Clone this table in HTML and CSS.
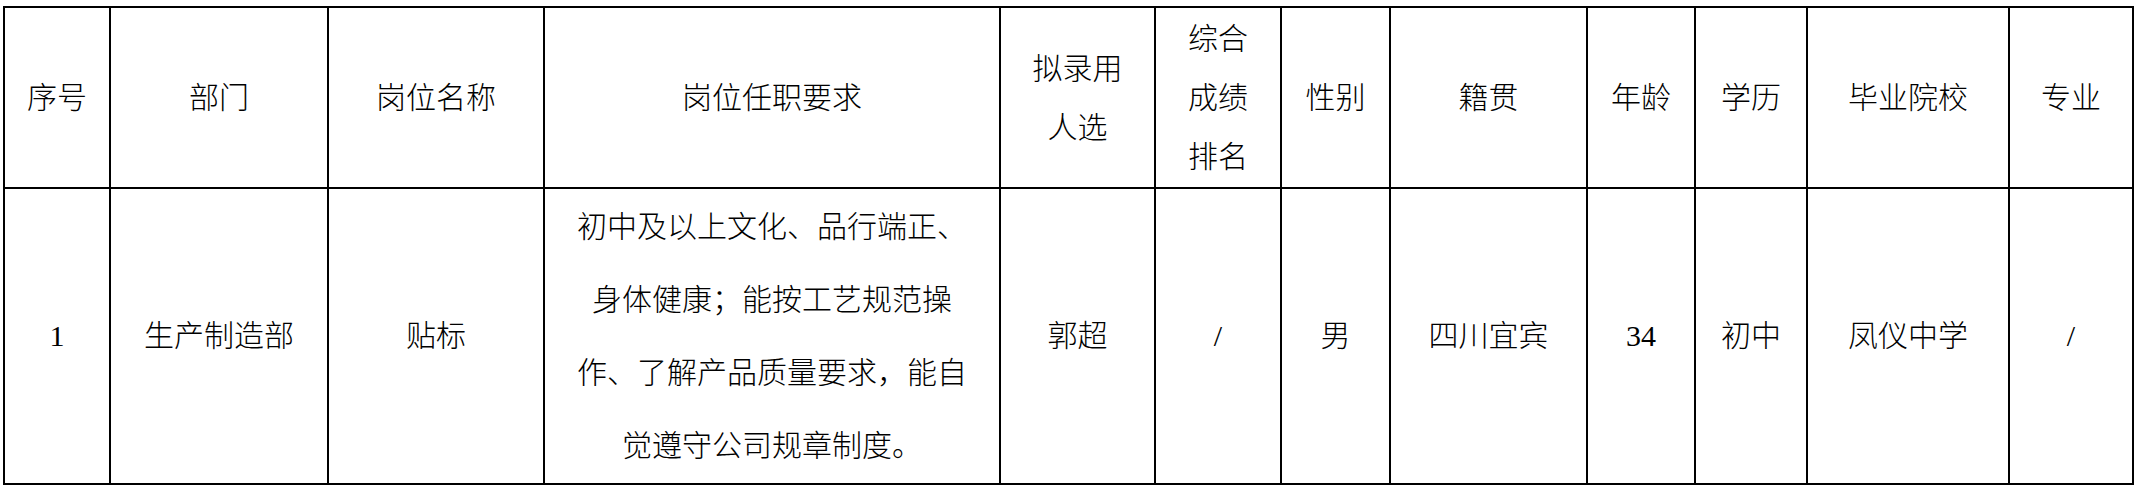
FILE: index.html
```html
<!DOCTYPE html>
<html lang="zh-CN">
<head>
<meta charset="utf-8">
<title>拟录用人选公示</title>
<link rel="stylesheet" href="styles.css">
</head>
<body>
<table class="grid">
  <colgroup>
    <col class="c-no"><col class="c-dept"><col class="c-post"><col class="c-req">
    <col class="c-name"><col class="c-rank"><col class="c-sex"><col class="c-home">
    <col class="c-age"><col class="c-edu"><col class="c-school"><col class="c-major">
  </colgroup>
  <thead>
    <tr class="head-row">
      <th>序号</th>
      <th>部门</th>
      <th>岗位名称</th>
      <th>岗位任职要求</th>
      <th class="multi">拟录用<br>人选</th>
      <th class="multi">综合<br>成绩<br>排名</th>
      <th>性别</th>
      <th>籍贯</th>
      <th>年龄</th>
      <th>学历</th>
      <th>毕业院校</th>
      <th>专业</th>
    </tr>
  </thead>
  <tbody>
    <tr class="body-row">
      <td class="num">1</td>
      <td>生产制造部</td>
      <td>贴标</td>
      <td class="req">初中及以上文化、品行端正、<br>身体健康；能按工艺规范操<br>作、了解产品质量要求，能自<br>觉遵守公司规章制度。</td>
      <td>郭超</td>
      <td class="slash">/</td>
      <td>男</td>
      <td>四川宜宾</td>
      <td class="num">34</td>
      <td>初中</td>
      <td>凤仪中学</td>
      <td class="slash">/</td>
    </tr>
  </tbody>
</table>
</body>
</html>
```

FILE: styles.css
```css
html, body {
  background: #ffffff;
}
body {
  margin: 6px 0 0 3px;
  font-family: "Liberation Serif", "Noto Sans CJK SC", serif;
  color: #000000;
}
.grid {
  border-collapse: collapse;
  table-layout: fixed;
  width: 2131px;
}
.grid th,
.grid td {
  border: 2px solid #000000;
  padding: 0;
  text-align: center;
  vertical-align: middle;
  font-size: 30px;
  font-weight: 300;
  white-space: nowrap;
  overflow: hidden;
}
.c-no { width: 106px; }
.c-dept { width: 218px; }
.c-post { width: 216px; }
.c-req { width: 456px; }
.c-name { width: 155px; }
.c-rank { width: 126px; }
.c-sex { width: 109px; }
.c-home { width: 197px; }
.c-age { width: 108px; }
.c-edu { width: 112px; }
.c-school { width: 202px; }
.c-major { width: 124px; }

.head-row { height: 181px; }
.head-row th { line-height: 40px; }
.head-row th.multi { line-height: 59px; }
.body-row { height: 296px; }
.body-row td { line-height: 40px; }
.body-row td.req { line-height: 73px; }
.num { font-size: 31px; }
.slash { font-size: 40px; }
```
